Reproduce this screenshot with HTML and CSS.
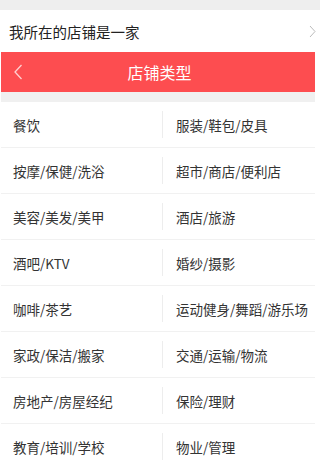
FILE: index.html
```html
<!DOCTYPE html>
<html lang="zh">
<head>
<meta charset="utf-8">
<link rel="stylesheet" href="styles.css">
</head>
<body>
<div class="top-gap"></div>
<div class="store-row">
  <span>我所在的店铺是一家</span>
  <svg class="chev" width="7" height="13" viewBox="0 0 7 13"><path d="M1 1 L6 6.5 L1 12" fill="none" stroke="#bbb" stroke-width="1"/></svg>
</div>
<div class="panel">
  <div class="header">
    <svg class="back" width="10" height="16" viewBox="0 0 10 16"><path d="M8.5 1 L2 8 L8.5 15" fill="none" stroke="#ffd0d0" stroke-width="1.3"/></svg>
    <span class="title">店铺类型</span>
  </div>
  <div class="gap"></div>
  <div class="list">
    <div class="row"><div class="cell">餐饮</div><div class="cell right">服装/鞋包/皮具</div></div>
    <div class="row"><div class="cell">按摩/保健/洗浴</div><div class="cell right">超市/商店/便利店</div></div>
    <div class="row"><div class="cell">美容/美发/美甲</div><div class="cell right">酒店/旅游</div></div>
    <div class="row"><div class="cell">酒吧/KTV</div><div class="cell right">婚纱/摄影</div></div>
    <div class="row"><div class="cell">咖啡/茶艺</div><div class="cell right">运动健身/舞蹈/游乐场</div></div>
    <div class="row"><div class="cell">家政/保洁/搬家</div><div class="cell right">交通/运输/物流</div></div>
    <div class="row"><div class="cell">房地产/房屋经纪</div><div class="cell right">保险/理财</div></div>
    <div class="row"><div class="cell">教育/培训/学校</div><div class="cell right">物业/管理</div></div>
  </div>
</div>
</body>
</html>
```
FILE: styles.css
```css
html, body {
  margin: 0;
  padding: 0;
  background: #ffffff;
  font-family: "Noto Sans CJK SC", "Noto Sans", sans-serif;
  overflow: hidden;
}
.top-gap {
  height: 10px;
  background: #eeeeee;
}
.store-row {
  height: 42px;
  display: flex;
  align-items: center;
  justify-content: space-between;
  padding: 0 4px 0 9px;
  font-size: 14.5px;
  color: #222;
}
.chev { display: block; }
.panel {
  width: 314px;
  margin-left: 1px;
}
.header {
  height: 40px;
  background: #fd4d50;
  display: flex;
  align-items: center;
  justify-content: center;
  position: relative;
}
.back {
  position: absolute;
  left: 12px;
  top: 12px;
}
.title {
  color: #ffffff;
  font-size: 16px;
  padding-left: 3px;
}
.gap {
  height: 10px;
  background: #f0f0f0;
}
.list {
  display: flex;
  flex-direction: column;
}
.row {
  height: 46px;
  display: grid;
  grid-template-columns: 161px 1fr;
  border-bottom: 1px solid #f1f1f1;
  box-sizing: border-box;
}
.cell {
  display: flex;
  align-items: center;
  padding-left: 12px;
  font-size: 13.5px;
  color: #333;
  white-space: nowrap;
}
.cell.right {
  padding-left: 14px;
  position: relative;
}
.cell.right::before {
  content: "";
  position: absolute;
  left: 0;
  top: 9px;
  bottom: 9px;
  width: 1px;
  background: #ededed;
}
```
